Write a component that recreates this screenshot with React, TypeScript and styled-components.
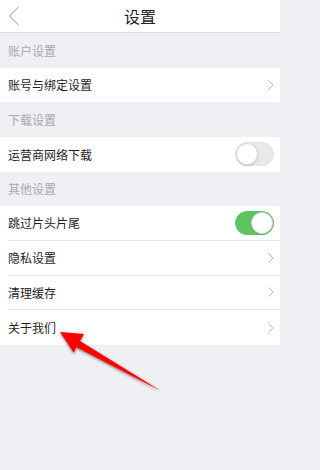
import React from "react";
import styled, { createGlobalStyle } from "styled-components";

const Global = createGlobalStyle`
  html, body { margin: 0; padding: 0; background: #efeff4; }
  body {
    font-family: "Noto Sans CJK SC", "Noto Sans", sans-serif;
    -webkit-font-smoothing: antialiased;
  }
`;

const Page = styled.div`
  position: relative;
  width: 280px;
  height: 470px;
  background: #efeff4;
  overflow: hidden;
`;

const NavBar = styled.div`
  height: 32px;
  background: #fff;
  border-bottom: 1px solid #dcdce0;
  display: flex;
  align-items: center;
  justify-content: center;
  position: relative;
`;

const BackButton = styled.div`
  position: absolute;
  left: 8px;
  top: 6px;
  width: 12px;
  height: 20px;
  display: flex;
`;

const Title = styled.div`
  font-size: 16px;
  color: #222;
`;

const SectionHeader = styled.div`
  height: 34.5px;
  display: flex;
  align-items: center;
  padding-left: 8px;
  font-size: 12px;
  color: #a9a9ad;
`;

const Group = styled.div`
  background: #fff;
`;

const Row = styled.div<{ $last?: boolean }>`
  height: 34.75px;
  box-sizing: border-box;
  display: flex;
  align-items: center;
  justify-content: space-between;
  margin-left: 8px;
  padding-right: 6px;
  border-bottom: ${(p) => (p.$last ? "none" : "1px solid #e3e3e6")};
`;

const Label = styled.div`
  font-size: 12px;
  color: #1e1e1e;
`;

const Toggle = styled.div<{ $on?: boolean }>`
  width: 39px;
  height: 24px;
  box-sizing: border-box;
  border-radius: 12px;
  background: ${(p) => (p.$on ? "#5ec463" : "#e8e8ea")};
  border: 1px solid ${(p) => (p.$on ? "#5ec463" : "#e4e4e6")};
  display: flex;
  justify-content: ${(p) => (p.$on ? "flex-end" : "flex-start")};
  align-items: center;
`;

const Knob = styled.div`
  width: 22px;
  height: 22px;
  border-radius: 50%;
  background: #fff;
  box-sizing: border-box;
  border: 1px solid #dcdcdc;
  box-shadow: 0 1px 2px rgba(0, 0, 0, 0.15);
`;

const ArrowOverlay = styled.svg`
  position: absolute;
  left: 0;
  top: 0;
  pointer-events: none;
`;

const Chevron = () => (
  <svg width="6" height="10" viewBox="0 0 6 10">
    <polyline points="0.5,0.5 5,5 0.5,9.5" fill="none" stroke="#b8b8bc" strokeWidth="1" />
  </svg>
);

const BackIcon = () => (
  <svg width="12" height="20" viewBox="0 0 12 20">
    <polyline points="10.5,1 1.5,10 10.5,19" fill="none" stroke="#8e8e93" strokeWidth="1" />
  </svg>
);

export default function App() {
  return (
    <Page>
      <Global />
      <NavBar>
        <BackButton>
          <BackIcon />
        </BackButton>
        <Title>设置</Title>
      </NavBar>

      <SectionHeader>账户设置</SectionHeader>
      <Group>
        <Row $last>
          <Label>账号与绑定设置</Label>
          <Chevron />
        </Row>
      </Group>

      <SectionHeader>下载设置</SectionHeader>
      <Group>
        <Row $last>
          <Label>运营商网络下载</Label>
          <Toggle>
            <Knob />
          </Toggle>
        </Row>
      </Group>

      <SectionHeader>其他设置</SectionHeader>
      <Group>
        <Row>
          <Label>跳过片头片尾</Label>
          <Toggle $on>
            <Knob />
          </Toggle>
        </Row>
        <Row>
          <Label>隐私设置</Label>
          <Chevron />
        </Row>
        <Row>
          <Label>清理缓存</Label>
          <Chevron />
        </Row>
        <Row $last>
          <Label>关于我们</Label>
          <Chevron />
        </Row>
      </Group>

      <ArrowOverlay width="280" height="470" viewBox="0 0 280 470">
        <defs>
          <filter id="sh" x="-20%" y="-20%" width="140%" height="140%">
            <feGaussianBlur in="SourceAlpha" stdDeviation="1.6" />
            <feOffset dx="0" dy="1" result="b" />
            <feComponentTransfer>
              <feFuncA type="linear" slope="0.55" />
            </feComponentTransfer>
            <feMerge>
              <feMergeNode />
              <feMergeNode in="SourceGraphic" />
            </feMerge>
          </filter>
        </defs>
        <polygon
          points="60,332 84,334 80,341 161,391 76,347 74,353"
          fill="#ff0000"
          filter="url(#sh)"
        />
      </ArrowOverlay>
    </Page>
  );
}
